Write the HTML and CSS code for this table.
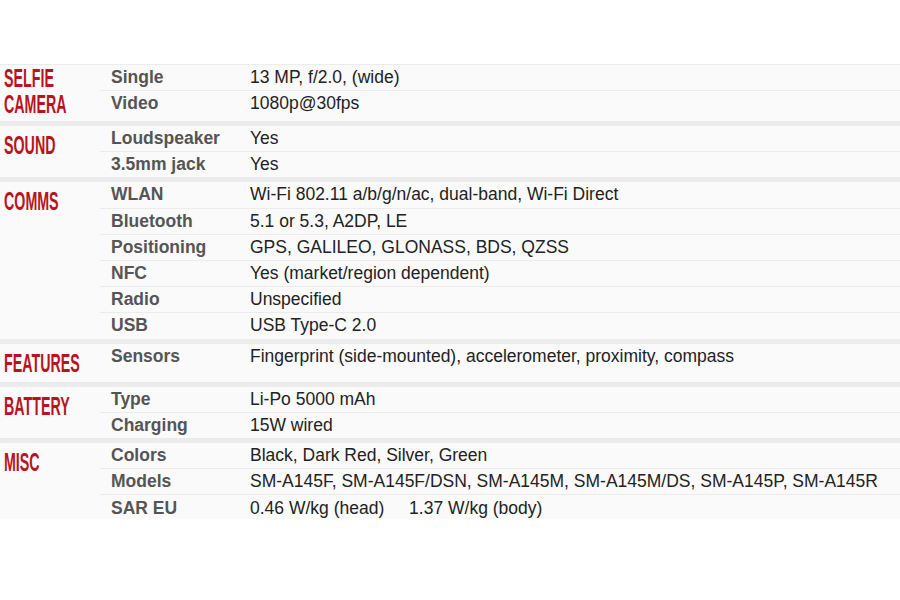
FILE: index.html
```html
<!DOCTYPE html>
<html>
<head>
<meta charset="utf-8">
<link rel="stylesheet" href="styles.css">
</head>
<body>
<div class="specs">
  <section class="group first">
    <div class="cat two"><span class="cat-label">SELFIE<br>CAMERA</span></div>
    <div class="rows">
      <div class="row"><div class="ttl">Single</div><div class="nfo">13 MP, f/2.0, (wide)</div></div>
      <div class="row"><div class="ttl">Video</div><div class="nfo">1080p@30fps</div></div>
    </div>
  </section>
  <section class="group">
    <div class="cat"><span class="cat-label">SOUND</span></div>
    <div class="rows">
      <div class="row"><div class="ttl">Loudspeaker</div><div class="nfo">Yes</div></div>
      <div class="row"><div class="ttl">3.5mm jack</div><div class="nfo">Yes</div></div>
    </div>
  </section>
  <section class="group">
    <div class="cat"><span class="cat-label">COMMS</span></div>
    <div class="rows">
      <div class="row"><div class="ttl">WLAN</div><div class="nfo">Wi-Fi 802.11 a/b/g/n/ac, dual-band, Wi-Fi Direct</div></div>
      <div class="row"><div class="ttl">Bluetooth</div><div class="nfo">5.1 or 5.3, A2DP, LE</div></div>
      <div class="row"><div class="ttl">Positioning</div><div class="nfo">GPS, GALILEO, GLONASS, BDS, QZSS</div></div>
      <div class="row"><div class="ttl">NFC</div><div class="nfo">Yes (market/region dependent)</div></div>
      <div class="row"><div class="ttl">Radio</div><div class="nfo">Unspecified</div></div>
      <div class="row"><div class="ttl">USB</div><div class="nfo">USB Type-C 2.0</div></div>
    </div>
  </section>
  <section class="group">
    <div class="cat"><span class="cat-label">FEATURES</span></div>
    <div class="rows rows-tall">
      <div class="row"><div class="ttl">Sensors</div><div class="nfo">Fingerprint (side-mounted), accelerometer, proximity, compass</div></div>
    </div>
  </section>
  <section class="group">
    <div class="cat"><span class="cat-label">BATTERY</span></div>
    <div class="rows">
      <div class="row"><div class="ttl">Type</div><div class="nfo">Li-Po 5000 mAh</div></div>
      <div class="row"><div class="ttl">Charging</div><div class="nfo">15W wired</div></div>
    </div>
  </section>
  <section class="group">
    <div class="cat"><span class="cat-label">MISC</span></div>
    <div class="rows">
      <div class="row"><div class="ttl">Colors</div><div class="nfo">Black, Dark Red, Silver, Green</div></div>
      <div class="row"><div class="ttl">Models</div><div class="nfo">SM-A145F, SM-A145F/DSN, SM-A145M, SM-A145M/DS, SM-A145P, SM-A145R</div></div>
      <div class="row"><div class="ttl">SAR EU</div><div class="nfo">0.46 W/kg (head) <span class="sar-gap">1.37 W/kg (body)</span></div></div>
    </div>
  </section>
</div>
</body>
</html>
```

FILE: styles.css
```css
html, body {
  margin: 0;
  padding: 0;
  background: #ffffff;
}

body {
  padding-top: 64px;
  font-family: "Liberation Sans", Arial, sans-serif;
}

.specs {
  width: 900px;
  height: 455px;
  overflow: hidden;
  background: #fafafa;
}

.group {
  display: grid;
  grid-template-columns: 100px 1fr;
  border-top: 5.5px solid #ebebeb;
}

.group.first {
  border-top: 1px solid #ececec;
}

.cat {
  padding: 6px 0 0 4px;
  line-height: 26px;
}

.cat.two {
  padding-top: 0;
}

.cat-label {
  display: inline-block;
  font-family: "Liberation Sans", Arial, sans-serif;
  font-weight: bold;
  font-size: 25px;
  line-height: 26px;
  color: #b8141d;
  white-space: nowrap;
  transform: scaleX(0.57);
  transform-origin: left top;
}

.rows-tall {
  padding-bottom: 13px;
}

.row {
  display: grid;
  grid-template-columns: 150px 1fr;
  align-items: center;
  height: 25.2px;
  border-top: 1px solid #ececec;
  font-size: 17.5px;
  white-space: nowrap;
}

.row:first-child {
  border-top: none;
}

.ttl {
  padding-left: 11px;
  font-weight: bold;
  color: #555555;
}

.nfo {
  color: #222222;
}

.sar-gap {
  margin-left: 20px;
}
```
